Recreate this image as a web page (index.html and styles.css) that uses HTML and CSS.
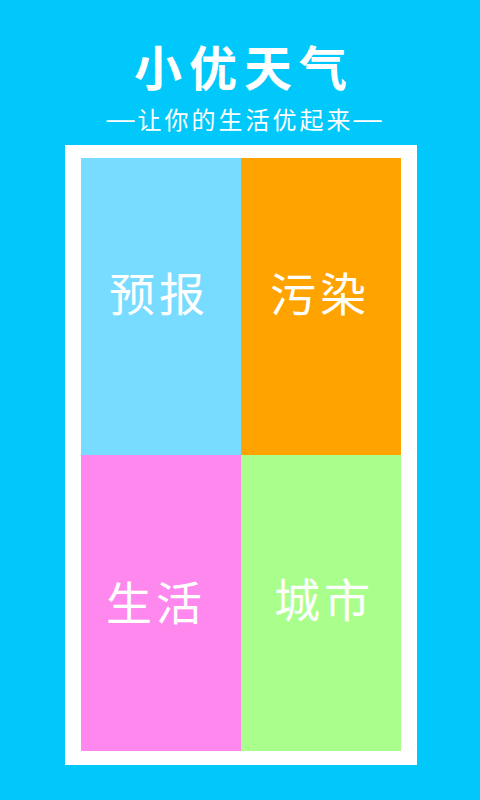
FILE: index.html
```html
<!DOCTYPE html>
<html lang="zh">
<head>
<meta charset="utf-8">
<link rel="stylesheet" href="styles.css">
</head>
<body>
<div class="page">
  <h1 class="title">小优天气</h1>
  <p class="subtitle"><span class="dash">—</span><span class="slogan">让你的生活优起来</span><span class="dash">—</span></p>
  <div class="frame">
    <div class="grid">
      <div class="cell forecast top">预报</div>
      <div class="cell pollution top">污染</div>
      <div class="cell life bl">生活</div>
      <div class="cell city br">城市</div>
    </div>
  </div>
</div>
</body>
</html>
```
FILE: styles.css
```css
html, body {
  margin: 0;
  padding: 0;
}
body {
  width: 480px;
  height: 800px;
  background: #00c8fb;
  font-family: "Noto Sans CJK SC", "Noto Sans", sans-serif;
  color: #fff;
  overflow: hidden;
}
.page {
  display: flex;
  flex-direction: column;
  align-items: center;
}
.title {
  margin: 41px 0 0 8px;
  font-size: 48px;
  font-weight: 700;
  letter-spacing: 7px;
  line-height: 48px;
}
.subtitle {
  margin: 13px 0 0 8px;
  font-size: 24px;
  line-height: 34px;
  display: flex;
  align-items: center;
}
.slogan {
  letter-spacing: 3px;
  margin: 0 0 0 3px;
}
.dash {
  font-family: "Liberation Sans", sans-serif;
  font-size: 28px;
  line-height: 34px;
}
.frame {
  margin: 9px 0 0 2px;
  background: #fff;
  padding: 13px 16px 14px 16px;
  width: 320px;
}
.grid {
  display: grid;
  grid-template-columns: 160px 160px;
  grid-template-rows: 297px 296px;
}
.cell {
  display: flex;
  align-items: center;
  justify-content: center;
  font-size: 46px;
  letter-spacing: 4px;
}
.top {
  padding-bottom: 32px;
}
.forecast {
  background: #77dcff;
  padding-right: 4px;
}
.pollution {
  background: #ffa300;
  padding-right: 2px;
}
.life {
  background: #ff88ee;
  padding-right: 10px;
  padding-bottom: 6px;
}
.city {
  background: #aaff8c;
  padding-left: 6px;
  padding-bottom: 12px;
}
```
